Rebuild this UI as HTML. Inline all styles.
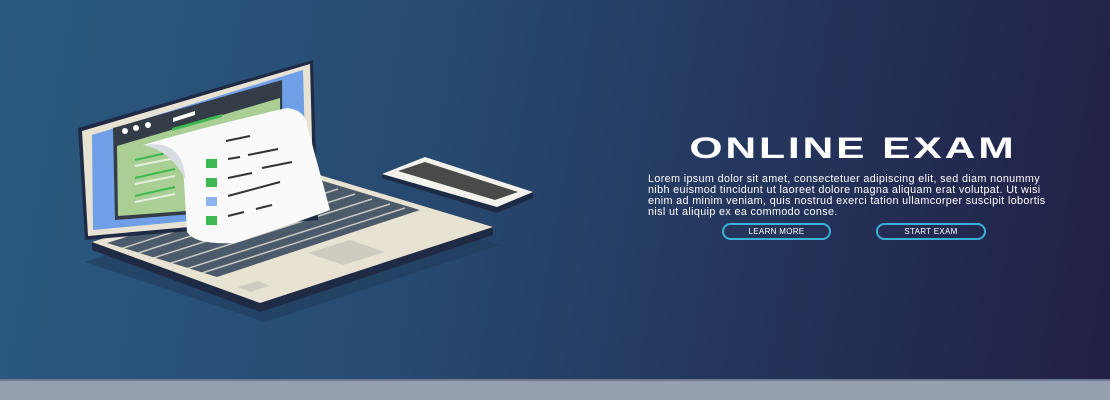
<!DOCTYPE html>
<html><head><meta charset="utf-8"><style>
*{margin:0;padding:0;box-sizing:border-box}
body{width:1110px;height:400px;overflow:hidden;position:relative;font-family:"Liberation Sans",sans-serif;
background:linear-gradient(100deg,#2b5a80 0%,#27496f 40%,#24335a 70%,#221f45 100%);}
.strip{position:absolute;left:0;top:379px;width:1110px;height:21px;background:#969fb0;border-top:2px solid #6f7a92}
.title{position:absolute;left:688px;top:132px;width:330px;text-align:center;color:#fff;font-weight:bold;font-size:30px;letter-spacing:2px;white-space:nowrap;transform:scaleX(1.42);transform-origin:center}
.p{position:absolute;left:648px;top:174px;width:420px;color:#fff;font-size:10.8px;letter-spacing:0.35px;line-height:11px;white-space:nowrap}
.btn{position:absolute;top:223px;height:17px;border:2px solid #3cb0d8;border-radius:9px;color:#fff;font-size:8px;text-align:center;line-height:13px;letter-spacing:.3px}
</style></head><body>
<svg width="1110" height="400" style="position:absolute;left:0;top:0">
<polygon points="85,262 320,190 500,245 265,322" fill="#203c5c" opacity=".6"/>
<polygon points="92,242 313,173 493,227 493,235 260,312 92,250" fill="#1f2a45"/>
<polygon points="92,242 313,173 493,227 260,303" fill="#e8e2d3"/>
<polygon points="107,243 313,178 420,210 217,277" fill="#4b5b6b"/>
<g stroke="#e8e2d3" stroke-width="1.5" opacity=".8">
<line x1="120" y1="249" x2="323" y2="184"/><line x1="135" y1="254" x2="338" y2="189"/><line x1="150" y1="259" x2="355" y2="194"/><line x1="168" y1="264" x2="372" y2="199"/><line x1="186" y1="269" x2="390" y2="204"/><line x1="202" y1="273" x2="405" y2="208"/>
</g>
<polygon points="308,253 350,240 385,252 343,265" fill="#cfcbc0"/>
<polygon points="238,287 258,281 270,286 250,292" fill="#cfcbc0"/>
<polygon points="78,128 313,60 318,220 85,240" fill="#1f2a45"/>
<polygon points="82,131 310,64 314,216 88,236" fill="#e8e2d3"/>
<polygon points="92,135 303,70 307,210 93,230" fill="#6f9fe6"/>
<polygon points="113,128 282,80 283,207 115,220" fill="#333c47"/>
<polygon points="117,146 280,98 281,204 118,216" fill="#a9cf95"/>
<circle cx="125" cy="131" r="3" fill="#fff"/><circle cx="136" cy="128" r="3" fill="#fff"/><circle cx="148" cy="125" r="3" fill="#fff"/>
<polygon points="173,118 195,111 195,115 173,122" fill="#fff"/>
<polygon points="172,128 222,114 222,117 172,131" fill="#3fb94f"/>
<g stroke="#3fb94f" stroke-width="2"><line x1="135" y1="160" x2="175" y2="151"/><line x1="135" y1="178" x2="175" y2="169"/><line x1="135" y1="196" x2="175" y2="187"/></g>
<g stroke="#e6eee0" stroke-width="2"><line x1="135" y1="166" x2="175" y2="158"/><line x1="135" y1="184" x2="175" y2="176"/><line x1="135" y1="202" x2="175" y2="194"/></g>
<path d="M143,145 Q200,128 287,108 Q305,110 307,125 L330,210 Q290,225 235,243 Q195,245 187,232 L183,165 Q178,152 143,145 Z" fill="#fafafa"/>
<path d="M143,145 Q175,140 183,165 L186,180 Q170,150 143,145Z" fill="#d8dde2"/>
<g fill="#3fb94f"><rect x="206" y="159" width="11" height="9"/><rect x="206" y="178" width="11" height="9"/><rect x="206" y="216" width="11" height="9"/></g>
<rect x="206" y="197" width="11" height="9" fill="#8db4ef"/>
<g stroke="#333" stroke-width="2"><line x1="226" y1="141" x2="250" y2="136"/><line x1="228" y1="159" x2="240" y2="157"/><line x1="248" y1="155" x2="278" y2="149"/><line x1="228" y1="178" x2="252" y2="173"/><line x1="262" y1="168" x2="292" y2="162"/><line x1="228" y1="196" x2="280" y2="182"/><line x1="228" y1="216" x2="244" y2="212"/><line x1="256" y1="209" x2="272" y2="205"/></g>
<!-- phone -->
<polygon points="382,178 382,174 497,207 533,192 533,198 497,213" fill="#1d2a44"/>
<polygon points="382,174 425,157 533,192 497,207" fill="#f4f2ec"/>
<polygon points="398,171 425,162 518,192 495,200" fill="#4a4a4a"/>
</svg>
<div class="title">ONLINE EXAM</div>
<div class="p">Lorem ipsum dolor sit amet, consectetuer adipiscing elit, sed diam nonummy<br>nibh euismod tincidunt ut laoreet dolore magna aliquam erat volutpat. Ut wisi<br>enim ad minim veniam, quis nostrud exerci tation ullamcorper suscipit lobortis<br>nisl ut aliquip ex ea commodo conse.</div>
<div class="btn" style="left:722px;width:109px">LEARN MORE</div>
<div class="btn" style="left:876px;width:110px">START EXAM</div>
<div class="strip"></div>
</body></html>
